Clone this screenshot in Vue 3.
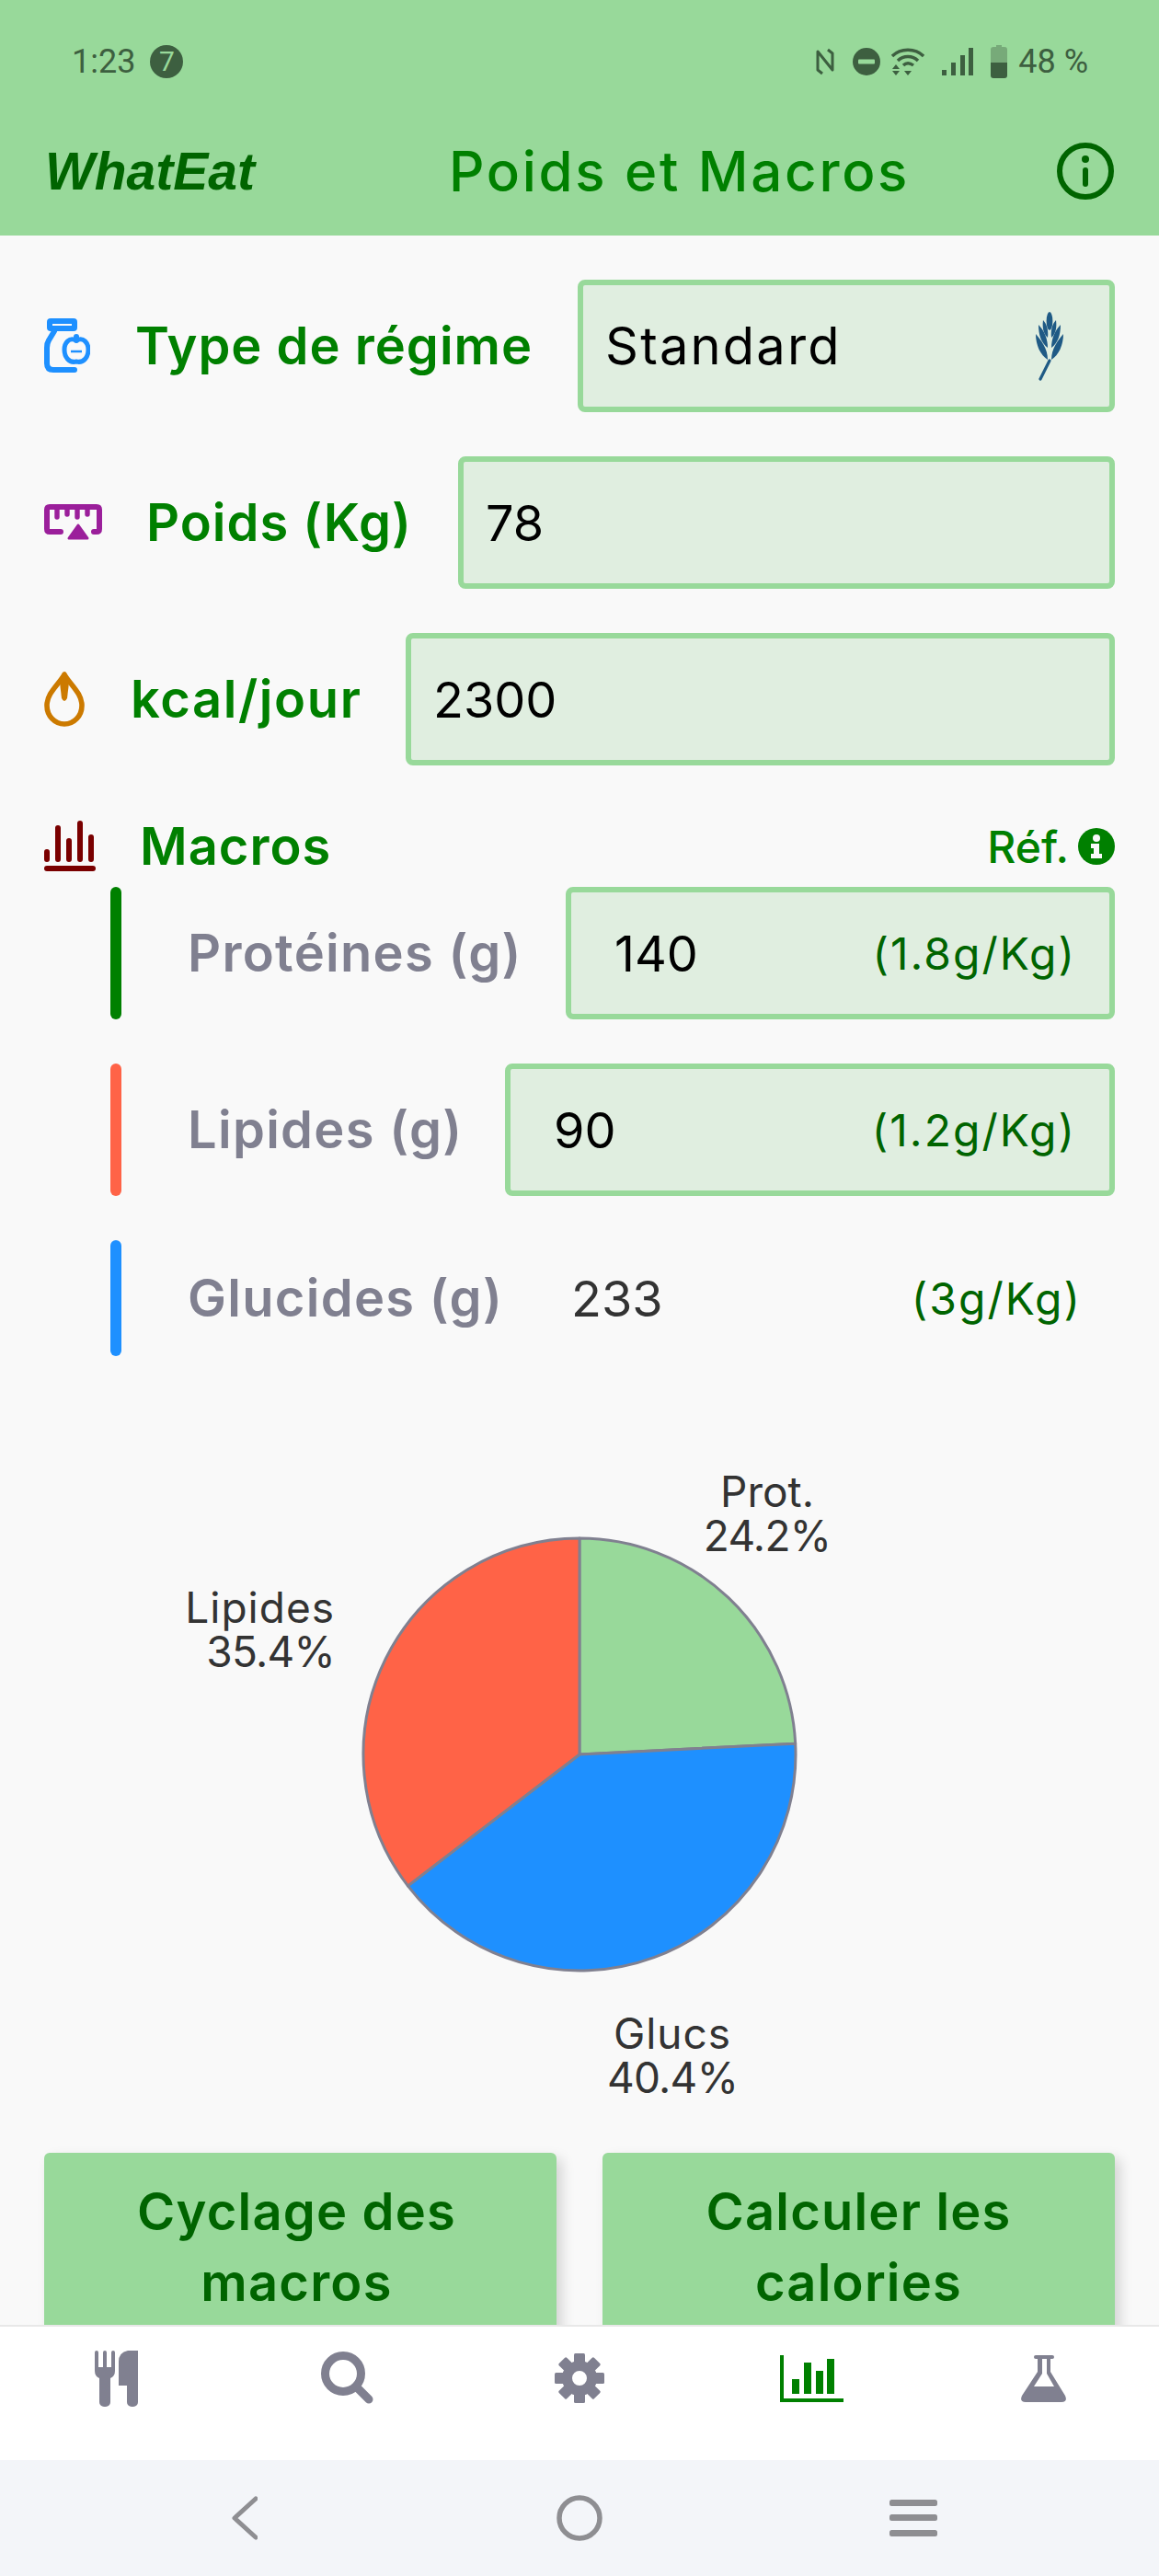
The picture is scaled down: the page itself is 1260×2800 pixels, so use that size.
<template>
  <div class="phone">
    <header class="top">
      <div class="status">
        <span class="time">1:23</span>
        <span class="badge">7</span>
        <span class="status-right">
          <svg width="20" height="30" viewBox="0 0 20 30" class="st-icon nfc">
            <path d="M7 28 2 24V4l16 20V6L13 2" fill="none" stroke="#3d5f40" stroke-width="3" stroke-linejoin="round" />
          </svg>
          <svg width="30" height="30" viewBox="0 0 30 30" class="st-icon dnd">
            <circle cx="15" cy="15" r="15" fill="#3d5f40" />
            <rect x="6" y="12.5" width="18" height="5" rx="1" fill="#98d99a" />
          </svg>
          <svg width="36" height="30" viewBox="0 0 36 30" class="st-icon wifi">
            <path d="M1 9C10 0 26 0 35 9" fill="none" stroke="#3d5f40" stroke-width="3.4" />
            <path d="M7 14C13 8 23 8 29 14" fill="none" stroke="#3d5f40" stroke-width="3.4" />
            <path d="M13 19c3-3 7-3 11 0" fill="none" stroke="#3d5f40" stroke-width="3.4" />
            <path d="M5 18 9 23H1ZM1 25H9L5 30ZM14 25h8l-4 5Z" fill="#3d5f40" />
          </svg>
          <svg width="34" height="30" viewBox="0 0 34 30" class="st-icon signal">
            <rect x="0" y="24" width="5" height="6" fill="#3d5f40" />
            <rect x="10" y="16" width="5" height="14" fill="#3d5f40" />
            <rect x="20" y="8" width="5" height="22" fill="#3d5f40" />
            <rect x="29" y="0" width="5" height="30" fill="#3d5f40" />
          </svg>
          <svg width="18" height="36" viewBox="0 0 18 36" class="st-icon battery">
            <path d="M6 0h6v2h3a3 3 0 0 1 3 3v14H0V5a3 3 0 0 1 3-3h3Z" fill="#77aa79" />
            <path d="M0 19h18v14a3 3 0 0 1-3 3H3a3 3 0 0 1-3-3Z" fill="#3d5f40" />
          </svg>
          <span class="pct">48 %</span>
        </span>
      </div>
      <div class="title-bar">
        <span class="logo">WhatEat</span>
        <span class="page-title">Poids et Macros</span>
        <svg class="head-info" width="62" height="62" viewBox="0 0 62 62">
          <circle cx="31" cy="31" r="28" fill="none" stroke="#006400" stroke-width="6" />
          <circle cx="31" cy="18" r="4" fill="#006400" />
          <rect x="28" y="27" width="6" height="21" rx="3" fill="#006400" />
        </svg>
      </div>
    </header>

    <main class="content">
      <!-- type de régime -->
      <div class="row">
        <svg class="icon" width="50" height="60" viewBox="0 0 50 60">
          <rect x="3" y="0" width="33" height="14" rx="4" fill="#1e90ff" />
          <rect x="9" y="6" width="21" height="2" fill="#f9f9f9" />
          <path d="M11 14 5 24Q3 27 3 32V49Q3 56 10 56H33" fill="none" stroke="#1e90ff" stroke-width="6" stroke-linecap="round" />
          <path d="M35 24C27 20 22 27 22 34 22 42 27 49 35 47 43 49 48 42 48 34 48 27 43 20 35 24Z" fill="#f9f9f9" stroke="#1e90ff" stroke-width="5" />
          <path d="M35 24V20" stroke="#1e90ff" stroke-width="6" stroke-linecap="round" />
          <path d="M29 36h12" stroke="#1e90ff" stroke-width="2.5" />
        </svg>
        <span class="label label-type">Type de régime</span>
        <div class="box">
          <span class="val val-text">Standard</span>
          <svg class="wheat" width="34" height="78" viewBox="0 0 34 78">
            <g fill="#1f5a85">
              <ellipse cx="17" cy="12" rx="3.4" ry="10" />
              <path v-for="(l, i) in wheatLeaves" :key="i" :d="l" />
            </g>
            <path d="M17 55 7 75" stroke="#1f5a85" stroke-width="3.2" stroke-linecap="round" />
          </svg>
        </div>
      </div>

      <!-- poids -->
      <div class="row">
        <svg class="icon" width="63" height="40" viewBox="0 0 63 40">
          <path d="M18 30H6Q3 30 3 27V6Q3 3 6 3H57Q60 3 60 6V27Q60 30 57 30H54" fill="none" stroke="#9b1f9b" stroke-width="6" stroke-linecap="round" />
          <path d="M14 4v10M25 4v7M36 4v10M47 4v7" stroke="#9b1f9b" stroke-width="5.4" stroke-linecap="round" />
          <path d="M37 23 27 37H47Z" fill="#9b1f9b" stroke="#9b1f9b" stroke-width="3" stroke-linejoin="round" />
        </svg>
        <span class="label label-poids">Poids (Kg)</span>
        <div class="box"><span class="val">78</span></div>
      </div>

      <!-- calories -->
      <div class="row">
        <svg class="icon" width="44" height="60" viewBox="0 0 44 60">
          <path d="M22 3C16 14 3 23 3 37A19 20 0 0 0 41 37C41 23 28 14 22 3Z" fill="none" stroke="#cc7a00" stroke-width="5.6" stroke-linejoin="round" />
          <path d="M22 1 27 12 25 29Q22 35 19 29L17 12Z" fill="#cc7a00" />
        </svg>
        <span class="label label-kcal">kcal/jour</span>
        <div class="box"><span class="val">2300</span></div>
      </div>

      <!-- macros -->
      <div class="macro-head">
        <svg class="icon" width="56" height="56" viewBox="0 0 56 56">
          <g stroke="#7a0000" stroke-width="6" stroke-linecap="round">
            <path d="M3 34v8M15 8v34M27 22v20M39 3v39M51 18v24" />
            <path d="M3 52h46" />
            <path d="M49 52h4" />
          </g>
        </svg>
        <span class="label label-macros">Macros</span>
        <span class="ref">Réf.</span>
        <svg class="ref-info" width="40" height="40" viewBox="0 0 40 40">
          <circle cx="20" cy="20" r="20" fill="#008000" />
          <circle cx="20" cy="11" r="4" fill="#f9f9f9" />
          <path d="M14 17h9v11h3v5H14v-5h3v-6h-3Z" fill="#f9f9f9" />
        </svg>
      </div>

      <div v-for="m in macros" :key="m.name" class="macro-row" :class="{ plain: !m.editable }">
        <span class="bar" :style="{ background: m.color }"></span>
        <span class="macro-label" :style="{ width: m.labelWidth + 'px' }">{{ m.name }}</span>
        <div v-if="m.editable" class="box box-macro">
          <span class="val">{{ m.grams }}</span>
          <span class="ratio">{{ m.ratio }}</span>
        </div>
        <div v-else class="plain-values">
          <span class="val val-plain">{{ m.grams }}</span>
          <span class="ratio">{{ m.ratio }}</span>
        </div>
      </div>

      <!-- camembert, coordonnées de la page -->
      <svg class="pie" width="1164" height="866" viewBox="48 1474 1164 866">
        <path v-for="s in slices" :key="s.color" :d="s.d" :fill="s.color" stroke="#808090" stroke-width="3" stroke-linejoin="round" />
        <g class="pie-text">
          <text x="834" y="1638" text-anchor="middle">Prot.</text>
          <text class="num" x="834" y="1686" text-anchor="middle">24.2%</text>
          <text class="word" x="364" y="1764" text-anchor="end">Lipides</text>
          <text class="num" x="364" y="1812" text-anchor="end">35.4%</text>
          <text class="word" x="731" y="2227" text-anchor="middle">Glucs</text>
          <text class="num" x="731" y="2275" text-anchor="middle">40.4%</text>
        </g>
      </svg>

      <div class="buttons">
        <div class="btn btn-left">Cyclage des<br />macros</div>
        <div class="btn">Calculer les<br />calories</div>
      </div>
    </main>

    <nav class="tabs">
      <div class="tab">
        <svg width="47" height="61" viewBox="0 0 47 61" fill="#808090">
          <path d="M0 2a2 2 0 0 1 4 0V18H9V2a2 2 0 0 1 4 0V18H18V2a2 2 0 0 1 4 0V22Q22 28 17 30V56a5 5 0 0 1-5 5H10a5 5 0 0 1-5-5V30Q0 28 0 22Z" />
          <path d="M26 36V12Q26 2 36 0H47V56a5 5 0 0 1-5 5H40a5 5 0 0 1-5-5V38H26Z" />
        </svg>
      </div>
      <div class="tab">
        <svg width="58" height="58" viewBox="0 0 58 58" fill="none" stroke="#808090" stroke-width="9" stroke-linecap="round">
          <circle cx="24" cy="24" r="19.5" />
          <path d="M39 39 52 52" />
        </svg>
      </div>
      <div class="tab">
        <svg width="54" height="54" viewBox="-27 -27 54 54" fill="#808090">
          <rect v-for="a in gearTeeth" :key="a" x="-6" y="-27" width="12" height="12" rx="1.5" :transform="`rotate(${a})`" />
          <circle r="13.5" fill="none" stroke="#808090" stroke-width="11" />
        </svg>
      </div>
      <div class="tab">
        <svg width="69" height="51" viewBox="0 0 69 51" fill="#008000">
          <path d="M0 0H4V47H69V51H0Z" />
          <rect x="13" y="26" width="8" height="16" />
          <rect x="26" y="8" width="8" height="34" />
          <rect x="39" y="17" width="8" height="25" />
          <rect x="51" y="4" width="8" height="38" />
        </svg>
      </div>
      <div class="tab">
        <svg width="49" height="51" viewBox="0 0 49 51" fill="#808090">
          <rect x="14" y="0" width="22" height="4" rx="2" />
          <path fill-rule="evenodd" d="M18 3H32V18L48 44Q51 51 44 51H5Q-2 51 1 44L18 18ZM23 3V20L14 34H36L28 20V3Z" />
        </svg>
      </div>
    </nav>

    <div class="sys-nav">
      <svg width="28" height="48" viewBox="0 0 28 48" fill="none" stroke="#8e8e92" stroke-width="5" stroke-linecap="round" stroke-linejoin="round">
        <path d="M26 3 3 24 26 45" />
      </svg>
      <svg width="50" height="50" viewBox="0 0 50 50" fill="none" stroke="#8e8e92" stroke-width="5.5">
        <circle cx="25" cy="25" r="22" />
      </svg>
      <svg width="52" height="40" viewBox="0 0 52 40" fill="#8e8e92">
        <rect x="0" y="0" width="52" height="7" rx="2.5" />
        <rect x="0" y="16" width="52" height="7" rx="2.5" />
        <rect x="0" y="33" width="52" height="7" rx="2.5" />
      </svg>
    </div>
  </div>
</template>

<script setup>
const macros = [
  { name: 'Protéines (g)', grams: 140, ratio: '(1.8g/Kg)', color: '#008000', labelWidth: 411, editable: true },
  { name: 'Lipides (g)', grams: 90, ratio: '(1.2g/Kg)', color: '#ff6347', labelWidth: 345, editable: true },
  { name: 'Glucides (g)', grams: 233, ratio: '(3g/Kg)', color: '#1e90ff', labelWidth: 417, editable: false }
]

// parts du camembert, en pourcentage
const parts = [
  { pct: 24.2, color: '#98d99a' },
  { pct: 40.4, color: '#1e90ff' },
  { pct: 35.4, color: '#ff6347' }
]
const cx = 630
const cy = 1907
const r = 235
let start = 0
const slices = parts.map((p) => {
  const end = start + (p.pct / 100) * Math.PI * 2
  const x1 = cx + r * Math.sin(start)
  const y1 = cy - r * Math.cos(start)
  const x2 = cx + r * Math.sin(end)
  const y2 = cy - r * Math.cos(end)
  const large = end - start > Math.PI ? 1 : 0
  start = end
  return { color: p.color, d: `M${cx} ${cy}L${x1} ${y1}A${r} ${r} 0 ${large} 1 ${x2} ${y2}Z` }
})

const gearTeeth = [0, 45, 90, 135, 180, 225, 270, 315]

const wheatLeaves = [
  'M15 30C10 26 9 18 10 11 14 15 16 22 15 30Z',
  'M19 30C24 26 25 18 24 11 20 15 18 22 19 30Z',
  'M15 41C8 36 5 27 5 16 11 22 15 31 15 41Z',
  'M19 41C26 36 29 27 29 16 23 22 19 31 19 41Z',
  'M15 54C7 49 2 38 2 26 8 33 15 42 15 54Z',
  'M19 54C27 49 32 38 32 26 26 33 19 42 19 54Z'
]
</script>

<style>
html,
body {
  margin: 0;
  background: #f9f9f9;
}
</style>

<style scoped>
.phone {
  width: 1260px;
  height: 2800px;
  display: flex;
  flex-direction: column;
  overflow: hidden;
  background: #f9f9f9;
  font-family: Inter, "Noto Sans", sans-serif;
}

.top {
  height: 256px;
  flex: none;
  background: #98d99a;
  box-sizing: border-box;
}

.status {
  height: 134px;
  display: flex;
  align-items: center;
  padding: 0 77px 0 78px;
  box-sizing: border-box;
  font-family: Roboto, sans-serif;
  font-size: 36px;
  color: #3d5f40;
}

.badge {
  width: 36px;
  height: 36px;
  margin-left: 16px;
  border-radius: 50%;
  background: #3d5f40;
  color: #98d99a;
  font-size: 30px;
  line-height: 36px;
  text-align: center;
}

.status-right {
  margin-left: auto;
  display: flex;
  align-items: center;
}

.st-icon {
  display: block;
}

.dnd {
  margin-left: 20px;
}

.wifi {
  margin-left: 12px;
}

.signal {
  margin-left: 19px;
}

.battery {
  margin-left: 19px;
}

.pct {
  margin-left: 12px;
}

.title-bar {
  height: 104px;
  display: flex;
  align-items: center;
  padding: 0 49px;
}

.logo {
  font-family: "Liberation Sans", sans-serif;
  font-size: 57px;
  font-weight: 700;
  font-style: italic;
  color: #006400;
}

.page-title {
  margin-left: 211px;
  font-size: 60px;
  font-weight: 500;
  letter-spacing: 2.7px;
  color: #008000;
  white-space: nowrap;
}

.head-info {
  margin-left: auto;
}

.content {
  flex: 1;
  min-height: 0;
  overflow: hidden;
  padding: 48px 48px 0;
}

.row {
  display: flex;
  align-items: center;
  height: 144px;
  margin-bottom: 48px;
}

.icon {
  flex: none;
}

.label {
  flex: none;
  font-size: 56px;
  font-weight: 600;
  letter-spacing: 1px;
  color: #008000;
  white-space: nowrap;
}

.label-type {
  margin-left: 49px;
  width: 481px;
}

.label-poids {
  margin-left: 48px;
  width: 339px;
}

.label-kcal {
  margin-left: 50px;
  width: 299px;
  letter-spacing: 1.6px;
}

.label-macros {
  margin-left: 48px;
}

.box {
  flex: 1;
  height: 144px;
  display: flex;
  align-items: center;
  justify-content: space-between;
  box-sizing: border-box;
  padding: 0 24px;
  border: 6px solid #98d99a;
  border-radius: 8px;
  background: #e0eee0;
}

.val {
  font-size: 54px;
  color: #000;
}

.val-text {
  font-size: 56px;
  letter-spacing: 2.2px;
}

.wheat {
  margin-right: 24px;
}

.macro-head {
  display: flex;
  align-items: center;
  height: 64px;
  margin-top: 56px;
}

.ref {
  margin-left: auto;
  font-size: 48px;
  font-weight: 500;
  color: #008000;
}

.ref-info {
  margin-left: 10px;
}

.macro-row {
  display: flex;
  align-items: center;
  height: 144px;
  margin-bottom: 48px;
  padding-left: 72px;
}

.macro-head + .macro-row {
  margin-top: 12px;
}

.macro-row.plain {
  height: 126px;
  margin-bottom: 0;
}

.bar {
  flex: none;
  width: 12px;
  align-self: stretch;
  border-radius: 6px;
}

.macro-label {
  flex: none;
  margin-left: 72px;
  font-size: 56px;
  font-weight: 600;
  letter-spacing: 1.3px;
  color: #808090;
  white-space: nowrap;
}

.box-macro {
  padding: 0 36px 0 47px;
}

.ratio {
  font-size: 48px;
  letter-spacing: 2px;
  color: #006400;
}

.plain-values {
  flex: 1;
  display: flex;
  align-items: center;
  justify-content: space-between;
  padding-right: 36px;
}

.val-plain {
  color: #333;
}

.pie {
  display: block;
}

.pie-text {
  font-family: Inter, "Noto Sans", sans-serif;
  font-size: 46px;
  fill: #333;
}

.pie-text .num {
  letter-spacing: -0.7px;
}

.pie-text .word {
  letter-spacing: 1px;
}

.buttons {
  display: flex;
  gap: 50px;
}

.btn {
  flex: 1;
  height: 230px;
  box-sizing: border-box;
  padding-top: 26px;
  border-radius: 6px;
  background: #98d99a;
  box-shadow: 6px 6px 14px rgba(0, 0, 0, 0.15);
  text-align: center;
  font-size: 56px;
  letter-spacing: 1.2px;
  line-height: 77px;
  font-weight: 600;
  color: #006400;
}

.btn-left {
  flex: none;
  width: 557px;
  padding-right: 8px;
}

.tabs {
  position: relative;
  z-index: 1;
  flex: none;
  height: 147px;
  display: flex;
  background: #fff;
  border-top: 2px solid #e8e8e8;
  box-sizing: border-box;
}

.tab {
  flex: 1;
  height: 112px;
  display: flex;
  align-items: center;
  justify-content: center;
}

.sys-nav {
  flex: none;
  height: 126px;
  display: flex;
  align-items: center;
  background: #f3f5f9;
  padding-left: 252px;
  box-sizing: border-box;
}

.sys-nav svg:nth-child(2) {
  margin-left: 325px;
}

.sys-nav svg:nth-child(3) {
  margin-left: 312px;
}
</style>
